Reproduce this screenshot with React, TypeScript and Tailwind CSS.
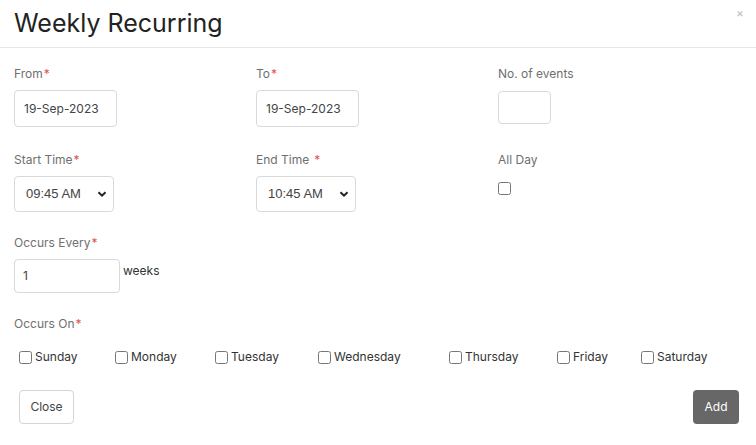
import React from "react";

const font = { fontFamily: "Inter, 'Noto Sans', sans-serif" };

function Label({ text, req, gap = false }: { text: string; req?: boolean; gap?: boolean }) {
  return (
    <div className="h-[16px] flex items-center text-[12px] text-[#6f6f6f] leading-none">
      <span>{text}</span>
      {req && <span className={`text-[#e3504f] ${gap ? "ml-[5px]" : "ml-[1px]"}`}>*</span>}
    </div>
  );
}

function Chevron() {
  return (
    <svg width="10" height="10" viewBox="0 0 10 10" className="text-[#222]">
      <path d="M1.5 3.2 L5 6.7 L8.5 3.2" fill="none" stroke="currentColor" strokeWidth="2" />
    </svg>
  );
}

function Select({ value }: { value: string }) {
  return (
    <div className="w-[100px] h-[36px] border border-[#d9d9d9] rounded-[4px] flex items-center justify-between pl-[11px] pr-[6px]">
      <span className="text-[13px] text-[#444]" style={{ fontFamily: "'Liberation Sans', Arial, sans-serif" }}>{value}</span>
      <Chevron />
    </div>
  );
}

function Day({ name, w }: { name: string; w: number }) {
  return (
    <label className="flex items-center shrink-0" style={{ width: w }}>
      <input type="checkbox" className="m-0 w-[13px] h-[13px]" />
      <span className="ml-[3px] text-[12px] text-[#333]">{name}</span>
    </label>
  );
}

export default function App() {
  return (
    <div className="w-[756px] h-[445px] bg-white relative" style={font}>
      <div className="h-[48px] border-b border-[#e6e6e6] flex items-center px-[14px]">
        <h1 className="text-[25px] text-[#222] font-normal leading-none">Weekly Recurring</h1>
      </div>
      <button className="absolute right-[12px] top-[7px] text-[12px] text-[#bdbdbd] leading-none">×</button>

      <div className="pl-[14px] pt-[18px]">
        <div className="grid grid-cols-[242px_242px_242px]">
          <div>
            <Label text="From" req />
            <div className="mt-[8px] w-[103px] h-[37px] border border-[#d9d9d9] rounded-[4px] flex items-center pl-[9px] text-[12px] text-[#444]">19-Sep-2023</div>
          </div>
          <div>
            <Label text="To" req />
            <div className="mt-[8px] w-[103px] h-[37px] border border-[#d9d9d9] rounded-[4px] flex items-center pl-[9px] text-[12px] text-[#444]">19-Sep-2023</div>
          </div>
          <div>
            <Label text="No. of events" />
            <div className="mt-[9px] w-[53px] h-[33px] border border-[#d9d9d9] rounded-[4px]" />
          </div>
        </div>

        <div className="grid grid-cols-[242px_242px_242px] mt-[25px]">
          <div>
            <Label text="Start Time" req />
            <div className="mt-[8px]"><Select value="09:45 AM" /></div>
          </div>
          <div>
            <Label text="End Time" req gap />
            <div className="mt-[8px]"><Select value="10:45 AM" /></div>
          </div>
          <div>
            <Label text="All Day" />
            <input type="checkbox" className="mt-[14px] m-0 w-[13px] h-[13px] block" />
          </div>
        </div>

        <div className="mt-[23px]">
          <Label text="Occurs Every" req />
          <div className="mt-[8px] flex items-start">
            <div className="w-[106px] h-[34px] border border-[#d9d9d9] rounded-[4px] flex items-center pl-[8px] text-[12px] text-[#444]">1</div>
            <span className="ml-[3px] mt-[3px] text-[12px] text-[#333]">weeks</span>
          </div>
        </div>

        <div className="mt-[23px]">
          <Label text="Occurs On" req />
          <div className="mt-[16px] flex pl-[5px]">
            <Day name="Sunday" w={96} />
            <Day name="Monday" w={100} />
            <Day name="Tuesday" w={103} />
            <Day name="Wednesday" w={131} />
            <Day name="Thursday" w={108} />
            <Day name="Friday" w={84} />
            <Day name="Saturday" w={90} />
          </div>
        </div>
      </div>

      <div className="flex justify-between pl-[19px] pr-[17px] mt-[24px]">
        <button className="w-[55px] h-[34px] border border-[#d4d4d4] rounded-[4px] text-[12px] text-[#444] bg-white">Close</button>
        <button className="w-[46px] h-[34px] rounded-[4px] text-[12px] text-white bg-[#676767]">Add</button>
      </div>
    </div>
  );
}
